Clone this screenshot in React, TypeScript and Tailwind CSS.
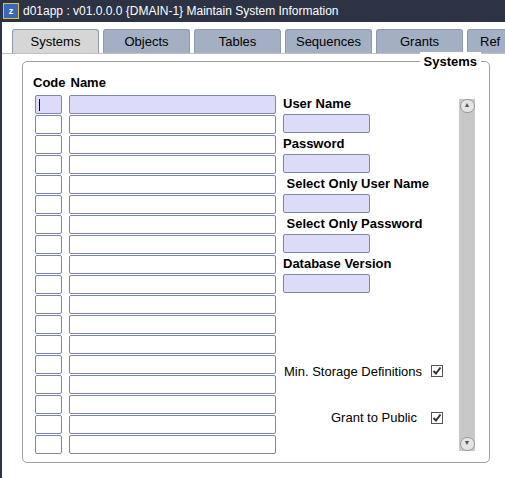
import React from 'react';

const rows = Array.from({ length: 18 }, (_, i) => i);

function Check() {
  return (
    <span className="inline-flex shrink-0 w-[12px] h-[12px] border border-[#555] bg-white items-center justify-center">
      <svg width="10" height="10" viewBox="0 0 10 10">
        <path d="M1.5 5 L4 7.5 L8.5 1.5" stroke="#333" strokeWidth="2" fill="none" />
      </svg>
    </span>
  );
}

function Field({ w, first }: { w: string; first?: boolean }) {
  return (
    <div className={`${w} h-[19px] rounded-[2px] border border-[#7d87a3] ${first ? 'bg-[#dcdcfa]' : 'bg-white'} relative`}>
      {first && w === 'w-[27px]' && <span className="absolute left-[3px] top-[3px] w-px h-[12px] bg-black" />}
    </div>
  );
}

export default function App() {
  const tabs = ['Systems', 'Objects', 'Tables', 'Sequences', 'Grants', 'Ref'];
  return (
    <div className="w-[505px] h-[478px] bg-white overflow-hidden border-l-2 border-[#2b3345] text-[13px]" style={{ fontFamily: '"Liberation Sans", Arial, sans-serif' }}>
      <div className="h-[22px] bg-[#2b3345] text-white flex items-center gap-1 pl-[3px] -ml-[2px]">
        <span className="w-[16px] h-[16px] bg-[#3a68b8] border border-[#e0c040] text-[9px] font-bold leading-none flex items-center justify-center">z</span>
        <span className="text-[12px]">d01app : v01.0.0.0 {'{'}DMAIN-1{'}'} Maintain System Information</span>
      </div>
      <div className="flex pl-[10px] pt-[7px] gap-[4px] h-[31px] overflow-hidden">
        {tabs.map((t, i) => (
          <div key={t} className={`shrink-0 w-[87px] h-[24px] flex items-center rounded-t-[3px] border border-b-0 border-[#8e99b0] ${i === 0 ? 'bg-[#d6d6d6]' : 'bg-[#a3afc3]'} ${i === 5 ? 'justify-start pl-[12px]' : 'justify-center'}`}>
            {t}
          </div>
        ))}
      </div>
      <div className="border-t border-[#c0c0c0] h-[8px]" />
      <div className="relative ml-[20px] h-[402px] border border-[#a0a0a0] rounded-[5px] w-[468px]">
        <div className="absolute -top-[10px] right-[8px] bg-white px-[4px] font-bold text-[13px]">Systems</div>
        <div className="flex pl-[10px] pt-[11px] font-bold gap-[5px]">
          <span>Code</span><span>Name</span>
        </div>
        <div className="flex">
          <div className="flex flex-col pl-[12px] pt-[2px]">
            {rows.map(i => (
              <div key={i} className="flex gap-[7px] h-[20px]">
                <Field w="w-[27px]" first={i === 0} />
                <Field w="w-[207px]" first={i === 0} />
              </div>
            ))}
          </div>
          <div className="flex flex-col pl-[7px] pt-[1px] w-[182px] font-bold">
            {['User Name', 'Password', ' Select Only User Name', ' Select Only Password', 'Database Version'].map(l => (
              <div key={l}>
                <div className="h-[20px] flex items-center whitespace-pre">{l}</div>
                <div className="w-[87px] h-[19px] mb-[1px] rounded-[2px] border border-[#7d87a3] bg-[#dcdcfa]" />
              </div>
            ))}
            <div className="flex items-center justify-end gap-[9px] mt-[68px] font-normal pr-[15px] whitespace-nowrap">
              Min. Storage Definitions <Check />
            </div>
            <div className="flex items-center justify-end gap-[14px] mt-[27px] font-normal pr-[15px] whitespace-nowrap">
              Grant to Public <Check />
            </div>
          </div>
          <div className="ml-[1px] mt-[6px] w-[16px] h-[352px] bg-[#c8c8c8] flex flex-col justify-between items-center">
            <div className="w-[15px] h-[14px] rounded-full bg-[#e4e4e4] border border-[#999] flex items-center justify-center text-[7px] text-[#555]">▲</div>
            <div className="w-[15px] h-[14px] rounded-full bg-[#e4e4e4] border border-[#999] flex items-center justify-center text-[7px] text-[#555]">▼</div>
          </div>
        </div>
      </div>
    </div>
  );
}
